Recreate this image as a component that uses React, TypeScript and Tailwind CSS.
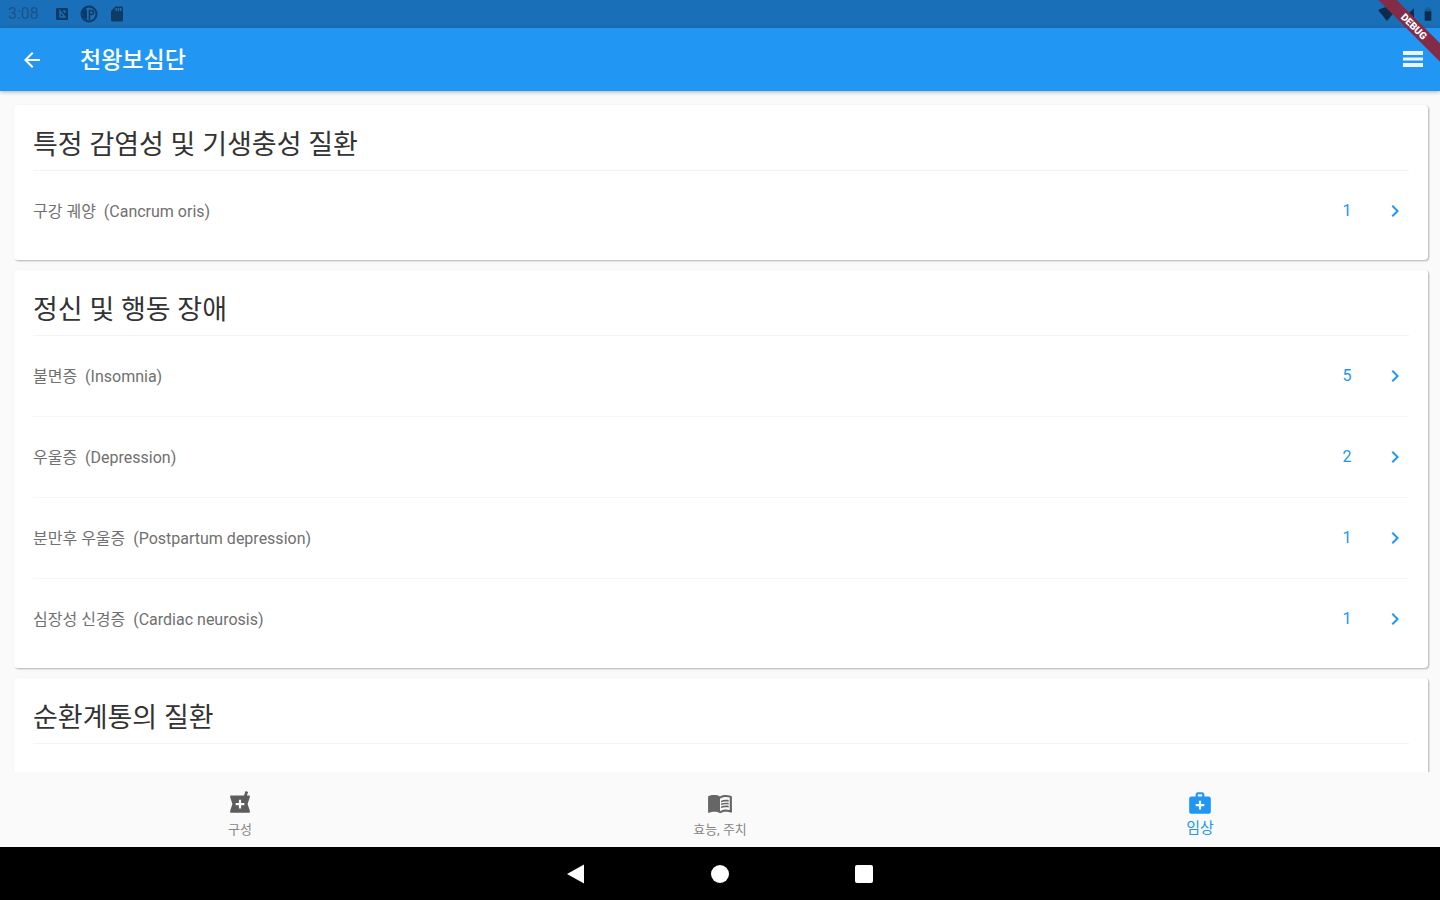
import type { ReactNode } from "react";
import {
  MdArrowBack,
  MdBattery90,
  MdChevronRight,
  MdLocalPharmacy,
  MdMedicalServices,
  MdMenuBook,
  MdSdStorage,
  MdSignalWifi4Bar,
} from "react-icons/md";

type Item = { ko: string; en: string; count: number };
type Section = { title: string; items: Item[] };

const sections: Section[] = [
  {
    title: "특정 감염성 및 기생충성 질환",
    items: [{ ko: "구강 궤양", en: "Cancrum oris", count: 1 }],
  },
  {
    title: "정신 및 행동 장애",
    items: [
      { ko: "불면증", en: "Insomnia", count: 5 },
      { ko: "우울증", en: "Depression", count: 2 },
      { ko: "분만후 우울증", en: "Postpartum depression", count: 1 },
      { ko: "심장성 신경증", en: "Cardiac neurosis", count: 1 },
    ],
  },
  { title: "순환계통의 질환", items: [] },
];

function StatusBar() {
  return (
    <div className="flex h-7 shrink-0 items-center justify-between bg-[#1a70b8] pl-2 pr-1 text-[#0d3b66]">
      <div className="flex items-center gap-2.5">
        <span className="w-9 text-base leading-5 text-[#175488]">3:08</span>
        <svg className="size-4" viewBox="0 0 16 16" aria-hidden="true">
          <rect x="2" y="2" width="12" height="12" rx="1" fill="currentColor" />
          <path d="M6 11V5l5 6H6M9 5h2v2" fill="none" stroke="#1a70b8" strokeWidth="1.4" />
        </svg>
        <svg className="size-[18px]" viewBox="0 0 18 18" aria-hidden="true">
          <circle cx="9" cy="9" r="7.5" fill="none" stroke="currentColor" strokeWidth="2" />
          <path d="M2 5l4-2 1 3v9l-4-3z" fill="currentColor" />
          <path d="M9.500 15V5.500h2a1.500 1.500 0 0 1 0 4h-2" fill="none" stroke="currentColor" strokeWidth="1.600" />
        </svg>
        <MdSdStorage className="size-[18px]" aria-hidden="true" />
      </div>
      <div className="flex items-center gap-1 text-[#0b2c4c]">
        <MdSignalWifi4Bar className="size-[18px]" aria-hidden="true" />
        <svg className="size-4" viewBox="0 0 16 16" aria-hidden="true">
          <path d="M14 2v12H2z" fill="currentColor" />
        </svg>
        <MdBattery90 className="size-4" aria-hidden="true" />
      </div>
    </div>
  );
}

function Row({ item, last }: { item: Item; last: boolean }) {
  return (
    <li className={last ? "" : "border-b border-[#f7f7f7]"}>
      <button type="button" className="flex h-20 w-full items-center pr-0.5 text-left">
        <span className="flex-1 whitespace-pre pt-0.5 text-base text-[#707070]">
          {item.ko + "  (" + item.en + ")"}
        </span>
        <span className="w-6 text-center text-base text-[#2196f3]">{item.count}</span>
        <MdChevronRight className="ml-6 size-6 stroke-[#2196f3] text-[#2196f3]" aria-hidden="true" />
      </button>
    </li>
  );
}

function SectionCard({ section }: { section: Section }) {
  return (
    <section className="min-h-[155px] shrink-0 rounded-sm bg-white px-[19px] pb-[9px] shadow-[1px_1px_2px_rgba(0,0,0,0.3)]">
      <h2 className="h-[66px] border-b border-[#f3f3f3] pt-5 text-[27px] leading-10 text-[#333333]">
        {section.title}
      </h2>
      <ul>
        {section.items.map((item, i) => (
          <Row key={item.en} item={item} last={i === section.items.length - 1} />
        ))}
      </ul>
    </section>
  );
}

function Tab({ label, icon, active }: { label: string; icon: ReactNode; active?: boolean }) {
  return (
    <button
      type="button"
      aria-current={active ? "page" : undefined}
      className={
        active
          ? "flex flex-1 flex-col items-center pt-[18px] text-[15px] leading-5 text-[#2196f3]"
          : "flex flex-1 flex-col items-center pt-[18px] text-[13px] leading-5 text-[#858585]"
      }
    >
      {icon}
      <span className={active ? "mt-0.5" : "mt-1"}>{label}</span>
    </button>
  );
}

export default function App() {
  return (
    <div className="relative flex h-screen flex-col overflow-hidden bg-[#fafafa] font-[Roboto,'Noto_Sans_CJK_KR',sans-serif]">
      <StatusBar />
      <header className="z-10 flex h-[63px] shrink-0 items-center bg-[#2196f3] px-4 text-white shadow-[0_1px_4px_rgba(0,0,0,0.3)]">
        <button type="button" aria-label="Back" className="flex size-8 items-center justify-center">
          <MdArrowBack className="size-6 stroke-white" />
        </button>
        <h1 className="ml-8 flex-1 pt-0.5 text-[23px] font-medium leading-8">천왕보심단</h1>
        <button type="button" aria-label="Menu" className="-mr-1 flex size-8 items-center justify-center">
          <svg className="size-6" viewBox="0 0 24 24" fill="#e9f4fe" aria-hidden="true">
            <path d="M3 3h20v4H3zM3 9.500h20v3H3zM3 15h20v4H3z" />
          </svg>
        </button>
      </header>

      <main className="flex min-h-0 flex-1 flex-col gap-[10px] overflow-hidden pl-[14px] pr-3 pt-[14px]">
        {sections.map((section) => (
          <SectionCard key={section.title} section={section} />
        ))}
      </main>

      <nav className="z-10 flex h-[75px] shrink-0 bg-[#fafafa]">
        <Tab label="구성" icon={<MdLocalPharmacy className="size-[26px] text-[#5c5c5c]" />} />
        <Tab label="효능, 주치" icon={<MdMenuBook className="size-[26px] text-[#666666]" />} />
        <Tab label="임상" active icon={<MdMedicalServices className="size-[26px]" />} />
      </nav>

      <div className="flex h-[53px] shrink-0 items-center justify-center gap-[120px] bg-black text-white">
        <button type="button" aria-label="System back">
          <svg className="size-6" viewBox="0 0 24 24" fill="currentColor">
            <path d="M3 12L20 2.500v19z" />
          </svg>
        </button>
        <button type="button" aria-label="Home">
          <svg className="size-6" viewBox="0 0 24 24" fill="currentColor">
            <circle cx="12" cy="12" r="9" />
          </svg>
        </button>
        <button type="button" aria-label="Recent apps">
          <svg className="size-6" viewBox="0 0 24 24" fill="currentColor">
            <rect x="3" y="3" width="18" height="18" rx="2" />
          </svg>
        </button>
      </div>

      <div className="pointer-events-none absolute right-0 top-0 z-20 size-16 overflow-hidden">
        <div className="absolute -right-8 top-5 flex h-[13px] w-[116px] rotate-45 items-center justify-center bg-[#842b48] text-[10px] font-black leading-3 text-white">
          DEBUG
        </div>
      </div>
    </div>
  );
}
